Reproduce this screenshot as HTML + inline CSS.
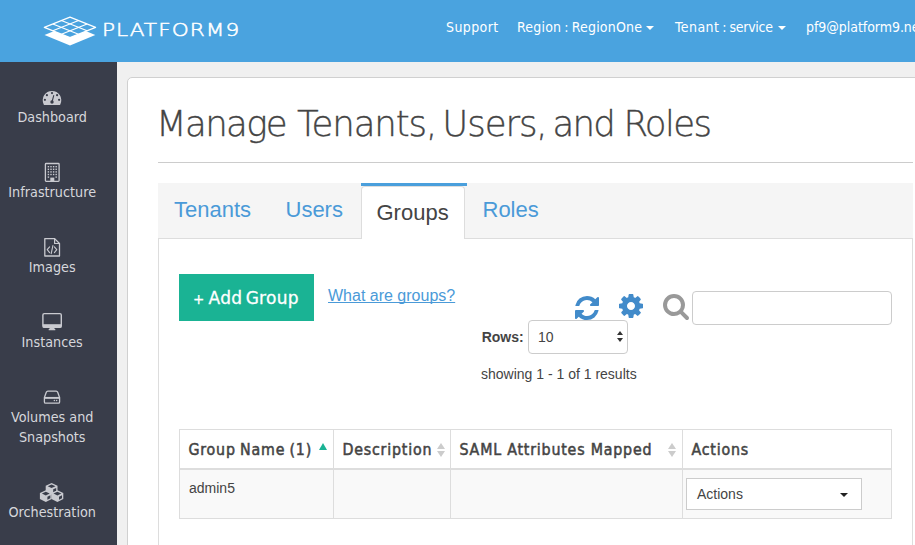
<!DOCTYPE html>
<html lang="en">
<head>
<meta charset="utf-8">
<title>Manage Tenants, Users, and Roles</title>
<style>
*{box-sizing:border-box;margin:0;padding:0}
html,body{width:915px;height:545px;overflow:hidden;background:#f0f0f0;font-family:"Liberation Sans",sans-serif;color:#444}
.abs{position:absolute}
#hdr{position:absolute;left:0;top:0;width:915px;height:62px;background:#4aa3df}
#side{position:absolute;left:0;top:62px;width:117px;height:483px;background:#393d4a}
#panel{position:absolute;left:127px;top:77px;width:800px;height:480px;background:#fff;border:1px solid #d0d0d0;border-radius:5px}
#brand{position:absolute;left:102.3px;top:18px;color:#fff;font-family:"DejaVu Sans Light","DejaVu Sans",sans-serif;font-weight:200;font-size:17px;line-height:24px;letter-spacing:0.85px;white-space:nowrap;-webkit-text-stroke:0.5px #fff;transform:scaleX(1.27);transform-origin:0 0}
.nav{position:absolute;top:18px;color:#fff;font-family:"DejaVu Sans Condensed","DejaVu Sans",sans-serif;font-size:14px;letter-spacing:0.2px;white-space:nowrap;line-height:18px}
.caret{position:absolute;width:0;height:0;border-left:4px solid transparent;border-right:4px solid transparent;border-top:4px solid #fff}
.sitem{position:absolute;left:0;width:104.4px;text-align:center;color:#d6d7dc;font-family:"DejaVu Sans Condensed","DejaVu Sans",sans-serif;font-size:14.25px;line-height:20px;white-space:nowrap}
h1{position:absolute;left:156px;top:99px;font-family:"DejaVu Sans Light","DejaVu Sans",sans-serif;font-weight:200;font-size:35.5px;line-height:50px;color:#444;white-space:nowrap;letter-spacing:-1.62px;-webkit-text-stroke:0.35px #444}
h1 span{position:absolute;top:0}
#hr{position:absolute;left:158px;top:162px;width:755px;height:1px;background:#ccc}
#tabs{position:absolute;left:158px;top:183px;width:755px;height:56px;background:#f5f5f5;border-bottom:1px solid #ddd}
.tab{position:absolute;font-size:22px;line-height:30px;color:#4a9ad8;white-space:nowrap}
#tabtop{position:absolute;left:361px;top:183px;width:106px;height:3px;background:#4a9fdc}
#tabact{position:absolute;left:361px;top:186px;width:104px;height:53px;background:#fff;border:1px solid #ddd;border-bottom:0;border-radius:4px 4px 0 0}
#content{position:absolute;left:158px;top:239px;width:755px;height:330px;border:1px solid #ddd;border-top:0;background:#fff}
#btn{position:absolute;left:179px;top:274px;width:135px;height:47px;background:#1ab394;color:#fff;font-family:"DejaVu Sans",sans-serif;font-size:17px;letter-spacing:0.3px;-webkit-text-stroke:0.3px #fff;line-height:49px;text-align:left;padding-left:14px;word-spacing:-2.4px;white-space:nowrap}
#btn span{font-size:13.5px;position:relative;top:-0.5px;margin-right:0.6px}
#what{position:absolute;left:328px;top:286px;font-size:16px;line-height:20px;color:#4a9ad8;text-decoration:underline;text-decoration-skip-ink:none;white-space:nowrap}
#search{position:absolute;left:692px;top:291px;width:200px;height:34px;border:1px solid #ccc;border-radius:4px;background:#fff}
#rows{position:absolute;left:481.7px;top:327px;font-size:14px;font-weight:bold;line-height:20px;color:#444}
#sel{position:absolute;left:528px;top:320px;width:100px;height:34px;border:1px solid #ccc;border-radius:4px;background:#fff;font-size:14px;line-height:32px;padding-left:9px;color:#444}
#showing{position:absolute;left:481px;top:364px;font-size:14px;line-height:20px;color:#444;white-space:nowrap}
#tbl{position:absolute;left:179px;top:429px;width:713px;height:90px;border:1px solid #ddd;background:#fff}
#thead{position:absolute;left:0;top:0;width:711px;height:40px;background:#fff;border-bottom:2px solid #ddd}
#trow{position:absolute;left:0;top:40px;width:711px;height:48px;background:#f9f9f9}
.vl{position:absolute;top:0;width:1px;height:88px;background:#ddd}
.th{position:absolute;top:10px;font-family:"DejaVu Sans Condensed","DejaVu Sans",sans-serif;font-weight:normal;font-size:15.8px;letter-spacing:0.8px;-webkit-text-stroke:0.5px #444;line-height:20px;color:#444;white-space:nowrap}
.tri{position:absolute;width:0;height:0;border-left:4.3px solid transparent;border-right:4.3px solid transparent}
#admin{position:absolute;left:9px;top:48px;font-size:14px;line-height:20px;color:#444}
#act{position:absolute;left:506px;top:48px;width:176px;height:32px;border:1px solid #ccc;background:#fff;font-size:14px;line-height:30px;padding-left:10px;color:#444}
</style>
</head>
<body>
<div id="hdr">
  <svg id="logo" style="position:absolute;left:40px;top:10px" width="60" height="40" viewBox="40 10 60 40">
    <polygon points="44.5,35 70,45.5 95.3,35 70,24.6" fill="#fff"/>
    <polygon points="44.3,27.4 70,37.6 95.6,27.4 70,17.1" fill="#4aa3df" stroke="#fff" stroke-width="1.2" stroke-linejoin="round"/>
    <g stroke="#fff" stroke-width="1.2" fill="none">
      <line x1="52.87" y1="23.97" x2="78.53" y2="34.2"/>
      <line x1="61.43" y1="20.53" x2="87.07" y2="30.8"/>
      <line x1="52.87" y1="30.8" x2="78.53" y2="20.53"/>
      <line x1="61.43" y1="34.2" x2="87.07" y2="23.97"/>
    </g>
  </svg>
  <div id="brand">PLATFORM9</div>
  <div class="nav" style="left:446px;letter-spacing:0.4px">Support</div>
  <div class="nav" style="left:517px;letter-spacing:0.2px;word-spacing:-1.2px">Region : RegionOne</div>
  <div class="caret" style="left:646px;top:26px"></div>
  <div class="nav" style="left:675px;letter-spacing:0.05px;word-spacing:-1.2px"><span style="letter-spacing:0.45px">Tenant</span> : <span style="letter-spacing:-0.25px">service</span></div>
  <div class="caret" style="left:778px;top:26px"></div>
  <div class="nav" style="left:806px;letter-spacing:-0.05px">pf9@platform9.net</div>
</div>
<div id="side">
  <svg id="icons" style="position:absolute;left:0;top:0" width="117" height="483" viewBox="0 62 117 483">
    <!-- dashboard -->
    <path d="M44.6,105 L59.4,105 Q60,105 60.3,104.4 A9.3,9.3 0 1 0 43.7,104.4 Q44,105 44.6,105 Z" fill="#c9cad0"/>
    <g fill="#393d4a"><circle cx="44.9" cy="99.8" r="1.1"/><circle cx="46.9" cy="95.2" r="1.1"/><circle cx="52" cy="93.1" r="1.1"/><circle cx="57.1" cy="95.2" r="1.1"/><circle cx="59.1" cy="99.8" r="1.1"/><circle cx="52" cy="102" r="1.7"/></g>
    <line x1="52" y1="102" x2="53.7" y2="95.6" stroke="#393d4a" stroke-width="1.1" stroke-linecap="round"/>
    <!-- building -->
    <rect x="45.4" y="163.5" width="13.7" height="17.8" rx="0.8" fill="none" stroke="#c9cad0" stroke-width="1.3"/>
    <g fill="#c9cad0"><rect x="47.7" y="166.0" width="1.4" height="1.4"/><rect x="50.3" y="166.0" width="1.4" height="1.4"/><rect x="52.9" y="166.0" width="1.4" height="1.4"/><rect x="55.5" y="166.0" width="1.4" height="1.4"/><rect x="47.7" y="168.6" width="1.4" height="1.4"/><rect x="50.3" y="168.6" width="1.4" height="1.4"/><rect x="52.9" y="168.6" width="1.4" height="1.4"/><rect x="55.5" y="168.6" width="1.4" height="1.4"/><rect x="47.7" y="171.2" width="1.4" height="1.4"/><rect x="50.3" y="171.2" width="1.4" height="1.4"/><rect x="52.9" y="171.2" width="1.4" height="1.4"/><rect x="55.5" y="171.2" width="1.4" height="1.4"/><rect x="47.7" y="173.8" width="1.4" height="1.4"/><rect x="50.3" y="173.8" width="1.4" height="1.4"/><rect x="52.9" y="173.8" width="1.4" height="1.4"/><rect x="55.5" y="173.8" width="1.4" height="1.4"/><rect x="47.7" y="176.4" width="1.4" height="1.4"/><rect x="55.5" y="176.4" width="1.4" height="1.4"/><rect x="50.3" y="177.6" width="4" height="3.6"/></g>
    <!-- file code -->
    <path d="M44.8,238.6 H54.6 L59.5,243.5 V256 H44.8 Z" fill="none" stroke="#c9cad0" stroke-width="1.3" stroke-linejoin="round"/>
    <path d="M54.6,238.6 V243.5 H59.5" fill="none" stroke="#c9cad0" stroke-width="1.2" stroke-linejoin="round"/>
    <g fill="none" stroke="#c9cad0" stroke-width="1.1" stroke-linecap="round" stroke-linejoin="round"><polyline points="49.6,246.8 47.2,249.7 49.6,252.6"/><line x1="52.9" y1="245.6" x2="51.2" y2="253.6"/><polyline points="54.4,246.8 56.8,249.7 54.4,252.6"/></g>
    <!-- desktop -->
    <rect x="42.9" y="313.6" width="18.4" height="13.8" rx="1.4" fill="none" stroke="#c9cad0" stroke-width="1.4"/>
    <rect x="42.9" y="324.2" width="18.4" height="3.4" fill="#c9cad0"/>
    <path d="M49.7,327.4 H54.3 L54.6,328.9 H55.3 V330.3 H48.7 V328.9 H49.4 Z" fill="#c9cad0"/>
    <!-- hdd -->
    <path d="M47.9,391.2 H56.1 Q57.3,391.2 57.7,392.3 L59.6,397.4 V402 Q59.6,403.2 58.4,403.2 H45.6 Q44.4,403.2 44.4,402 V397.4 L46.3,392.3 Q46.7,391.2 47.9,391.2 Z" fill="none" stroke="#c9cad0" stroke-width="1.3" stroke-linejoin="round"/>
    <line x1="44.4" y1="397.9" x2="59.6" y2="397.9" stroke="#c9cad0" stroke-width="1.9"/>
    <g fill="#c9cad0"><circle cx="54.4" cy="400.6" r="0.75"/><circle cx="56.6" cy="400.6" r="0.75"/></g>
    <!-- cubes -->
    <polygon points="51.6,482.9 57.5,485.7 57.5,491.6 51.6,494.5 45.7,491.6 45.7,485.7" fill="#c9cad0"/><polygon points="51.6,484.4 55.5,486.2 51.6,488.0 47.7,486.2" fill="#393d4a"/><polygon points="53.2,489.3 56.2,487.9 56.2,490.9 53.2,492.4" fill="#393d4a"/><polygon points="45.8,490.3 51.7,493.1 51.7,499.0 45.8,501.9 39.9,499.0 39.9,493.1" fill="#c9cad0"/><polygon points="45.8,491.8 49.7,493.6 45.8,495.4 41.9,493.6" fill="#393d4a"/><polygon points="47.4,496.7 50.4,495.3 50.4,498.3 47.4,499.8" fill="#393d4a"/><polygon points="57.4,490.3 63.3,493.1 63.3,499.0 57.4,501.9 51.5,499.0 51.5,493.1" fill="#c9cad0"/><polygon points="57.4,491.8 61.3,493.6 57.4,495.4 53.5,493.6" fill="#393d4a"/><polygon points="59.0,496.7 62.0,495.3 62.0,498.3 59.0,499.8" fill="#393d4a"/>
  </svg>
  <div class="sitem" style="top:45px">Dashboard</div>
  <div class="sitem" style="top:120px">Infrastructure</div>
  <div class="sitem" style="top:195px">Images</div>
  <div class="sitem" style="top:270px">Instances</div>
  <div class="sitem" style="top:345px">Volumes and<br>Snapshots</div>
  <div class="sitem" style="top:440px">Orchestration</div>
</div>
<div id="panel"></div>
<h1><span style="left:0">Manage</span> <span style="left:141px;letter-spacing:-1.1px">Tenants,</span> <span style="left:286.3px;letter-spacing:-1.07px">Users,</span> <span style="left:396.5px;letter-spacing:-1.8px">and</span> <span style="left:467.4px">Roles</span></h1>
<div id="hr"></div>
<div id="tabs"></div>
<div id="content"></div>
<div id="tabtop"></div>
<div id="tabact"></div>
<div class="tab" style="left:174px;top:195px">Tenants</div>
<div class="tab" style="left:285.5px;top:195px">Users</div>
<div class="tab" style="left:376.5px;top:198px;color:#444">Groups</div>
<div class="tab" style="left:482.5px;top:195px">Roles</div>
<div id="btn"><span>+</span> Add Group</div>
<div id="what">What are groups?</div>
<svg class="abs" style="left:575px;top:294px" width="28" height="28" viewBox="0 0 1792 1792"><path fill="#428bca" d="M1511 1056q0 5-1 7-64 268-268 434.500t-478 166.500q-146 0-282.500-55t-243.500-157l-129 129q-19 19-45 19t-45-19-19-45v-448q0-26 19-45t45-19h448q26 0 45 19t19 45-19 45l-137 137q71 66 161 102t187 36q134 0 250-65t186-179q11-17 53-117 8-23 30-23h192q13 0 22.500 9.500t9.500 22.500zm25-800v448q0 26-19 45t-45 19h-448q-26 0-45-19t-19-45 19-45l138-138q-148-137-349-137-134 0-250 65t-186 179q-11 17-53 117-8 23-30 23h-199q-13 0-22.500-9.500t-9.500-22.500v-7q65-268 270-434.500t480-166.500q146 0 284 55.500t245 156.500l130-129q19-19 45-19t45 19 19 45z"/></svg>
<svg class="abs" style="left:617px;top:292px" width="28" height="28" viewBox="0 0 1792 1792"><path fill="#428bca" fill-rule="evenodd" d="M1152 896q0-106-75-181t-181-75-181 75-75 181 75 181 181 75 181-75 75-181zm512-109v222q0 12-8 23t-20 13l-185 28q-19 54-39 91 35 50 107 138 10 12 10 25t-9 23q-27 37-99 108t-94 71q-12 0-26-9l-138-108q-44 23-91 38-16 136-29 186-7 28-36 28h-222q-14 0-24.500-8.500t-11.500-21.500l-28-184q-49-16-90-37l-141 107q-10 9-25 9-14 0-25-11-126-114-165-168-7-10-7-23 0-12 8-23 15-21 51-66.500t54-70.500q-27-50-41-99l-183-27q-13-2-21-12.500t-8-23.500v-222q0-12 8-23t19-13l186-28q14-46 39-92-40-57-107-138-10-12-10-24 0-10 9-23 26-36 98.500-107.500t94.500-71.500q13 0 26 10l138 107q44-23 91-38 16-136 29-186 7-28 36-28h222q14 0 24.500 8.500t11.500 21.500l28 184q49 16 90 37l142-107q9-9 24-9 13 0 25 10 129 119 165 170 7 8 7 22 0 12-8 23-15 21-51 66.500t-54 70.500q26 50 41 98l183 28q13 2 21 12.500t8 23.500z"/></svg>
<svg class="abs" style="left:662px;top:292px" width="28" height="28" viewBox="0 0 1792 1792"><path fill="#999" fill-rule="evenodd" d="M1216 832q0-185-131.500-316.500t-316.500-131.500-316.500 131.500-131.500 316.500 131.500 316.500 316.500 131.500 316.500-131.500 131.500-316.500zm512 832q0 52-38 90t-90 38q-54 0-90-38l-343-342q-179 124-399 124-143 0-273.500-55.500t-225-150-150-225-55.500-273.500 55.500-273.500 150-225 225-150 273.500-55.500 273.500 55.500 225 150 150 225 55.500 273.500q0 220-124 399l343 343q37 37 37 90z"/></svg>
<div id="search"></div>
<div id="rows">Rows:</div>
<div id="sel">10</div>
<div class="tri" style="left:616.6px;top:330.7px;border-left-width:3.4px;border-right-width:3.4px;border-bottom:4.8px solid #333"></div>
<div class="tri" style="left:616.6px;top:338px;border-left-width:3.4px;border-right-width:3.4px;border-top:4.8px solid #333"></div>
<div id="showing">showing 1 - 1 of 1 results</div>
<div id="tbl">
  <div id="thead"></div>
  <div id="trow"></div>
  <div class="vl" style="left:153px"></div>
  <div class="vl" style="left:270px"></div>
  <div class="vl" style="left:502px"></div>
  <div class="th" style="left:8.5px;word-spacing:-1px">Group Name (1)</div>
  <div class="th" style="left:162.5px">Description</div>
  <div class="th" style="left:279.5px">SAML Attributes Mapped</div>
  <div class="th" style="left:511.5px">Actions</div>
  <div class="tri" style="left:139.3px;top:12.5px;border-bottom:7px solid #1ab394"></div>
  <div class="tri" style="left:256.8px;top:12.5px;border-bottom:6.4px solid #ccc"></div>
  <div class="tri" style="left:256.8px;top:20.7px;border-top:6.4px solid #ccc"></div>
  <div class="tri" style="left:488.2px;top:12.5px;border-bottom:6.4px solid #ccc"></div>
  <div class="tri" style="left:488.2px;top:20.7px;border-top:6.4px solid #ccc"></div>
  <div id="admin">admin5</div>
  <div id="act">Actions</div>
  <div class="tri" style="left:659.8px;top:63.3px;border-left-width:4.2px;border-right-width:4.2px;border-top:4px solid #222"></div>
</div>
</body>
</html>
